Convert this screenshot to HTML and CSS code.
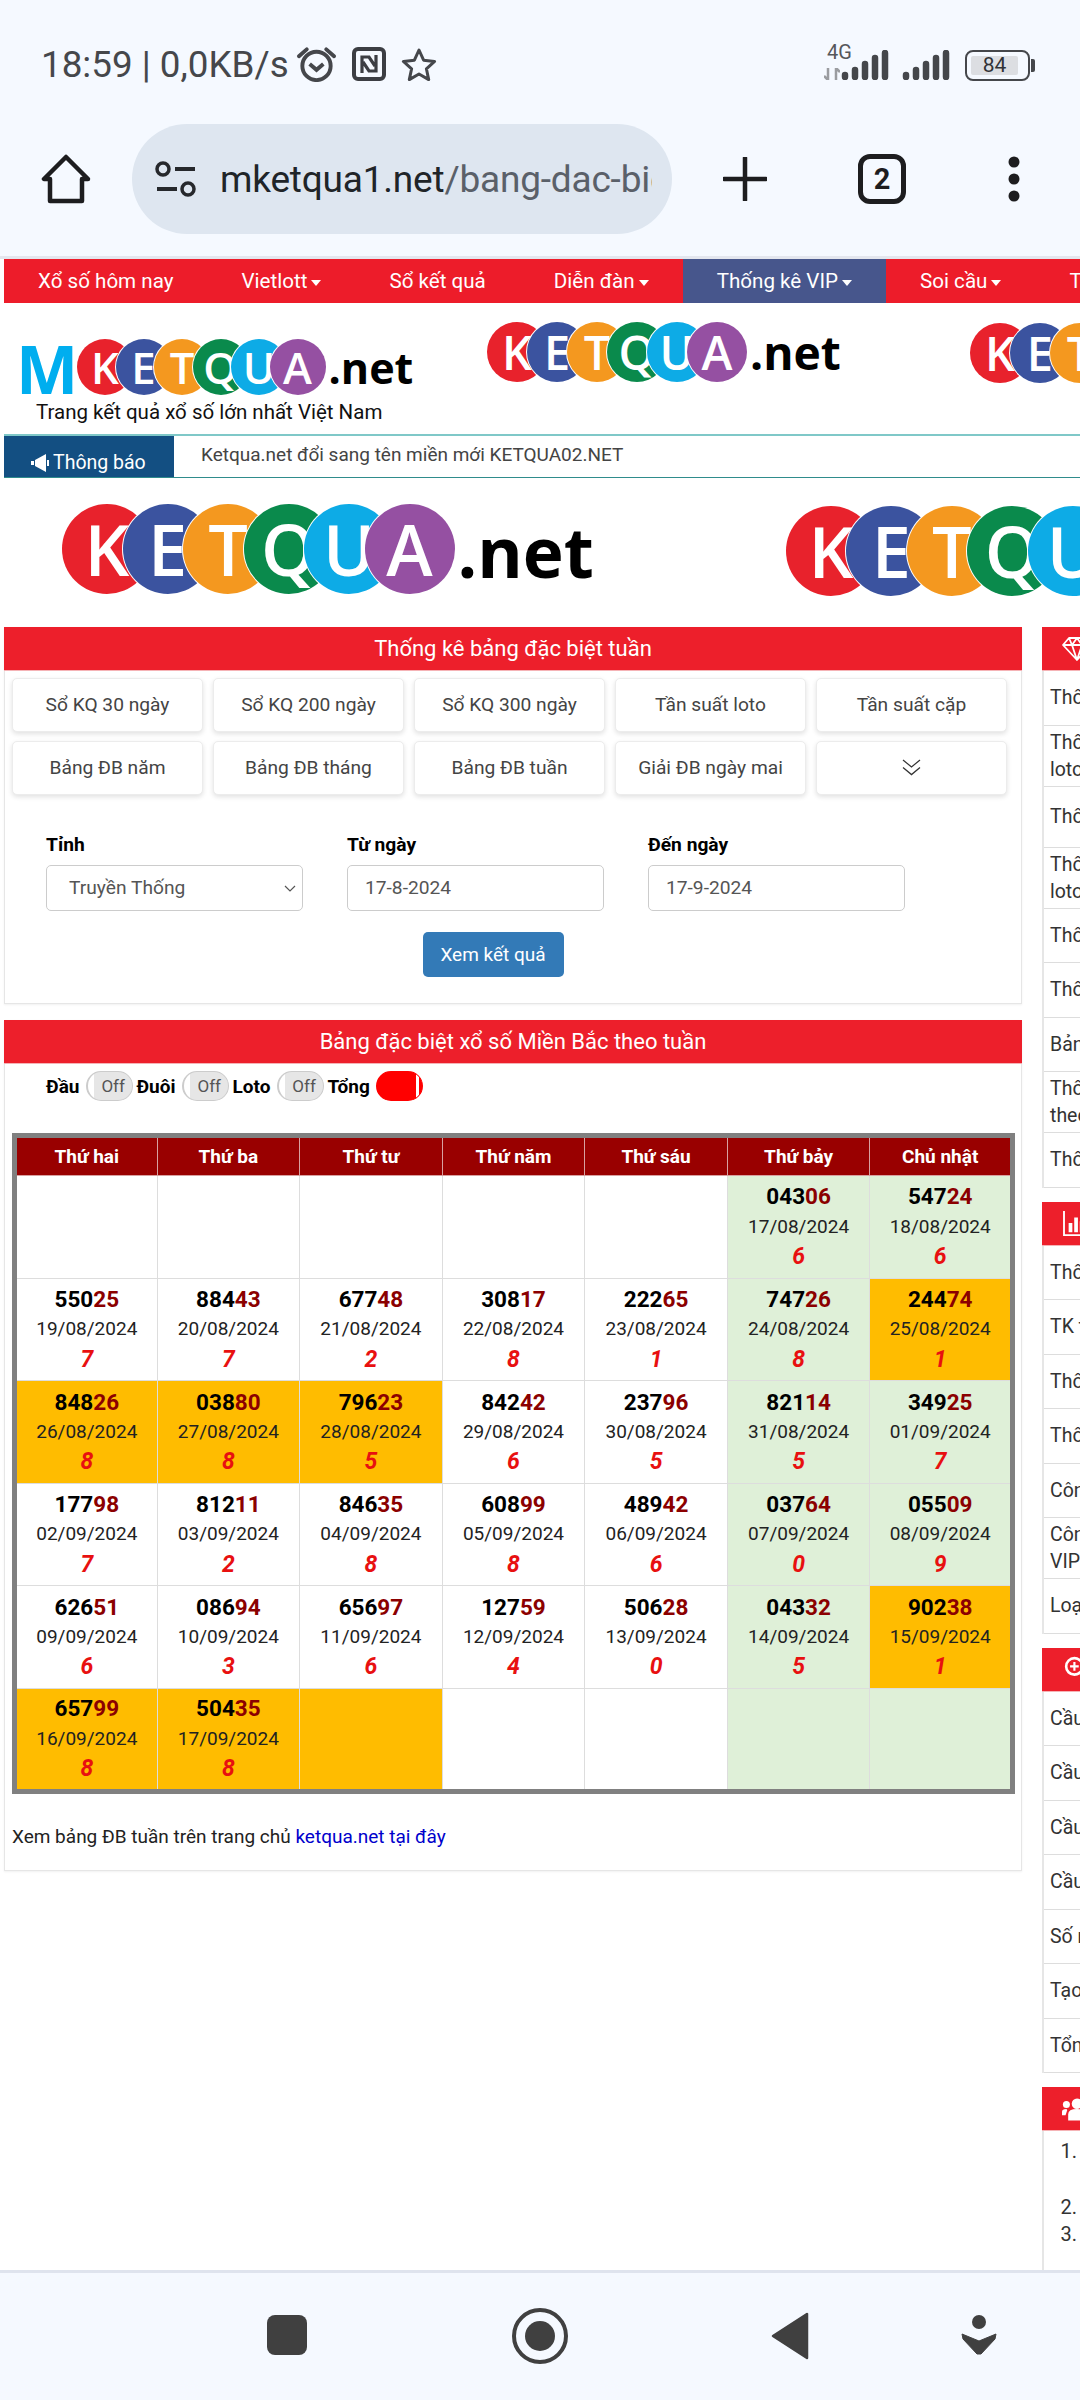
FILE: index.html
```html
<!DOCTYPE html>
<html lang="vi">
<head>
    <meta charset="UTF-8">
    <meta name="viewport" content="width=device-width, initial-scale=1.0">
    <title>Bảng đặc biệt tuần</title>
    <link rel="stylesheet" href="styles.css">
</head>
<body>
<div class="phone">
    <div class="chrome">
        <div class="status-bar">
            <span class="status-time">18:59 | 0,0KB/s</span>
            <svg class="ic-alarm" viewBox="0 0 42 36"><circle cx="21" cy="20" r="14.5" fill="none" stroke="#45474b" stroke-width="4"/><path d="M14 18l7 6 7-6" fill="none" stroke="#45474b" stroke-width="4"/><path d="M3 10L11 3M39 10L31 3" stroke="#45474b" stroke-width="4" stroke-linecap="round"/></svg>
            <svg class="ic-nfc" viewBox="0 0 34 34"><rect x="2" y="2" width="30" height="30" rx="4" fill="none" stroke="#3c3e43" stroke-width="4"/><path d="M10 26V10h7l6 9M24 8v16h-7l-6-9" fill="none" stroke="#3c3e43" stroke-width="3.2"/></svg>
            <svg class="ic-star" viewBox="0 0 36 34"><path d="M18 3l4.6 10.2 11 1.2-8.200 7.400 2.300 10.800L18 27l-9.700 5.600 2.300-10.800-8.200-7.400 11-1.200z" fill="none" stroke="#45474b" stroke-width="3" stroke-linejoin="round"/></svg>
            <div class="status-right">
                <span class="net-label">4G</span>
                <svg class="ic-arrows" viewBox="0 0 16 12"><path d="M4 0v12L0 8M12 12V0l4 4" fill="none" stroke="#9a9ca0" stroke-width="2.500"/></svg>
                <svg class="ic-signal first" viewBox="0 0 48 30"><path d="M4 27v-2M14 27V20M24 27V14M34 27V8M44 27V3" fill="none" stroke="#45474b" stroke-width="6.500" stroke-linecap="round"/></svg>
                <svg class="ic-signal" viewBox="0 0 48 30"><path d="M4 27v-2M14 27V20M24 27V14M34 27V8M44 27V3" fill="none" stroke="#45474b" stroke-width="6.500" stroke-linecap="round"/></svg>
                <div class="battery"><span class="battery-fill">84</span></div>
            </div>
        </div>
        <div class="toolbar">
            <svg class="ic-home" viewBox="0 0 50 50"><path d="M25 3L3 25h6v22h32V25h6z" fill="none" stroke="#1d1d1f" stroke-width="4.500" stroke-linejoin="round"/></svg>
            <div class="url-pill">
                <svg class="ic-tune" viewBox="0 0 42 36"><circle cx="8" cy="8" r="6" fill="none" stroke="#26282c" stroke-width="3.500"/><path d="M20 8h20M2 28h20" stroke="#26282c" stroke-width="4"/><circle cx="33" cy="28" r="6" fill="none" stroke="#26282c" stroke-width="3.500"/></svg>
                <div class="url-text"><span class="url-host">mketqua1.net</span>/bang-dac-biet-tuan.html</div>
            </div>
            <svg class="ic-plus" viewBox="0 0 44 44"><path d="M22 1v42M1 22h42" stroke="#1d1d1f" stroke-width="4.500" stroke-linecap="round"/></svg>
            <div class="tab-count">2</div>
            <svg class="ic-more" viewBox="0 0 12 46"><circle cx="6" cy="6" r="5.500" fill="#1d1d1f"/><circle cx="6" cy="23" r="5.500" fill="#1d1d1f"/><circle cx="6" cy="40" r="5.500" fill="#1d1d1f"/></svg>
        </div>
    </div>

    <div class="page">
        <nav class="topnav">
            <a>Xổ số hôm nay</a>
            <a class="caret">Vietlott</a>
            <a>Sổ kết quả</a>
            <a class="caret">Diễn đàn</a>
            <a class="caret active">Thống kê VIP</a>
            <a class="caret">Soi cầu</a>
            <a>Thành viên</a>
        </nav>

        <header class="site-head">
            <div class="brand">
                <div class="logo logo-brand">
                    <span class="logo-m">M</span>
                    <span class="c k">K</span><span class="c e">E</span><span class="c t">T</span><span class="c q">Q</span><span class="c u">U</span><span class="c a">A</span><span class="net">.net</span>
                </div>
                <div class="tagline">Trang kết quả xổ số lớn nhất Việt Nam</div>
            </div>
            <div class="logo logo-small logo-first">
                <span class="c k">K</span><span class="c e">E</span><span class="c t">T</span><span class="c q">Q</span><span class="c u">U</span><span class="c a">A</span><span class="net">.net</span>
            </div>
            <div class="logo logo-small logo-second">
                <span class="c k">K</span><span class="c e">E</span><span class="c t">T</span><span class="c q">Q</span><span class="c u">U</span><span class="c a">A</span><span class="net">.net</span>
            </div>
        </header>

        <div class="notice">
            <div class="notice-label">
                <svg class="ic-bullhorn" viewBox="0 0 20 20"><path d="M1 8h3v4H1zM5 7l11-6v18L5 13zM17 7h2v6h-2z" fill="#fff"/></svg>
                Thông báo
            </div>
            <div class="notice-text">Ketqua.net đổi sang tên miền mới KETQUA02.NET</div>
        </div>

        <div class="banner">
            <div class="logo logo-big">
                <span class="c k">K</span><span class="c e">E</span><span class="c t">T</span><span class="c q">Q</span><span class="c u">U</span><span class="c a">A</span><span class="net">.net</span>
            </div>
            <div class="logo logo-big logo-big-second">
                <span class="c k">K</span><span class="c e">E</span><span class="c t">T</span><span class="c q">Q</span><span class="c u">U</span><span class="c a">A</span><span class="net">.net</span>
            </div>
        </div>

        <div class="columns">
            <main class="main-col">
                <section class="panel panel-filter">
                    <h2 class="panel-title">Thống kê bảng đặc biệt tuần</h2>
                    <div class="quick-links">
                        <a>Sổ KQ 30 ngày</a>
                        <a>Sổ KQ 200 ngày</a>
                        <a>Sổ KQ 300 ngày</a>
                        <a>Tần suất loto</a>
                        <a>Tần suất cặp</a>
                        <a>Bảng ĐB năm</a>
                        <a>Bảng ĐB tháng</a>
                        <a>Bảng ĐB tuần</a>
                        <a>Giải ĐB ngày mai</a>
                        <a><svg class="ic-double" viewBox="0 0 20 18"><path d="M1 1l9 7.500L19 1M1 9l9 7.500L19 9" fill="none" stroke="#333" stroke-width="1.300"/></svg></a>
                    </div>
                    <form class="filter-form">
                        <div class="field">
                            <label>Tỉnh</label>
                            <div class="input select">Truyền Thống
                                <svg class="ic-chevron" viewBox="0 0 12 8"><path d="M1 1l5 5 5-5" fill="none" stroke="#555" stroke-width="1.200"/></svg>
                            </div>
                        </div>
                        <div class="field">
                            <label>Từ ngày</label>
                            <div class="input">17-8-2024</div>
                        </div>
                        <div class="field">
                            <label>Đến ngày</label>
                            <div class="input">17-9-2024</div>
                        </div>
                    </form>
                    <div class="submit-row"><button type="button">Xem kết quả</button></div>
                </section>

                <section class="panel panel-table">
                    <h2 class="panel-title">Bảng đặc biệt xổ số Miền Bắc theo tuần</h2>
                    <div class="toggles">
                        <b>Đầu</b><span class="toggle">Off</span>
                        <b>Đuôi</b><span class="toggle">Off</span>
                        <b>Loto</b><span class="toggle">Off</span>
                        <b>Tổng</b><span class="toggle on"></span>
                    </div>
                    <table class="db-table">
                        <thead>
                            <tr><th>Thứ hai</th><th>Thứ ba</th><th>Thứ tư</th><th>Thứ năm</th><th>Thứ sáu</th><th>Thứ bảy</th><th>Chủ nhật</th></tr>
                        </thead>
                        <tbody>
                            <tr>
                                <td></td><td></td><td></td><td></td><td></td>
                                <td class="wk"><b>043<i>06</i></b><span>17/08/2024</span><em>6</em></td>
                                <td class="wk"><b>547<i>24</i></b><span>18/08/2024</span><em>6</em></td>
                            </tr>
                            <tr>
                                <td><b>550<i>25</i></b><span>19/08/2024</span><em>7</em></td>
                                <td><b>884<i>43</i></b><span>20/08/2024</span><em>7</em></td>
                                <td><b>677<i>48</i></b><span>21/08/2024</span><em>2</em></td>
                                <td><b>308<i>17</i></b><span>22/08/2024</span><em>8</em></td>
                                <td><b>222<i>65</i></b><span>23/08/2024</span><em>1</em></td>
                                <td class="wk"><b>747<i>26</i></b><span>24/08/2024</span><em>8</em></td>
                                <td class="hot"><b>244<i>74</i></b><span>25/08/2024</span><em>1</em></td>
                            </tr>
                            <tr>
                                <td class="hot"><b>848<i>26</i></b><span>26/08/2024</span><em>8</em></td>
                                <td class="hot"><b>038<i>80</i></b><span>27/08/2024</span><em>8</em></td>
                                <td class="hot"><b>796<i>23</i></b><span>28/08/2024</span><em>5</em></td>
                                <td><b>842<i>42</i></b><span>29/08/2024</span><em>6</em></td>
                                <td><b>237<i>96</i></b><span>30/08/2024</span><em>5</em></td>
                                <td class="wk"><b>821<i>14</i></b><span>31/08/2024</span><em>5</em></td>
                                <td class="wk"><b>349<i>25</i></b><span>01/09/2024</span><em>7</em></td>
                            </tr>
                            <tr>
                                <td><b>177<i>98</i></b><span>02/09/2024</span><em>7</em></td>
                                <td><b>812<i>11</i></b><span>03/09/2024</span><em>2</em></td>
                                <td><b>846<i>35</i></b><span>04/09/2024</span><em>8</em></td>
                                <td><b>608<i>99</i></b><span>05/09/2024</span><em>8</em></td>
                                <td><b>489<i>42</i></b><span>06/09/2024</span><em>6</em></td>
                                <td class="wk"><b>037<i>64</i></b><span>07/09/2024</span><em>0</em></td>
                                <td class="wk"><b>055<i>09</i></b><span>08/09/2024</span><em>9</em></td>
                            </tr>
                            <tr>
                                <td><b>626<i>51</i></b><span>09/09/2024</span><em>6</em></td>
                                <td><b>086<i>94</i></b><span>10/09/2024</span><em>3</em></td>
                                <td><b>656<i>97</i></b><span>11/09/2024</span><em>6</em></td>
                                <td><b>127<i>59</i></b><span>12/09/2024</span><em>4</em></td>
                                <td><b>506<i>28</i></b><span>13/09/2024</span><em>0</em></td>
                                <td class="wk"><b>043<i>32</i></b><span>14/09/2024</span><em>5</em></td>
                                <td class="hot"><b>902<i>38</i></b><span>15/09/2024</span><em>1</em></td>
                            </tr>
                            <tr>
                                <td class="hot"><b>657<i>99</i></b><span>16/09/2024</span><em>8</em></td>
                                <td class="hot"><b>504<i>35</i></b><span>17/09/2024</span><em>8</em></td>
                                <td class="hot"></td>
                                <td></td><td></td>
                                <td class="wk"></td><td class="wk"></td>
                            </tr>
                        </tbody>
                    </table>
                    <p class="table-note">Xem bảng ĐB tuần trên trang chủ <a>ketqua.net tại đây</a></p>
                </section>
            </main>

            <aside class="side-col">
                <div class="side-box">
                    <div class="side-head"><svg class="side-ic" viewBox="0 0 30 26"><path d="M7 2h16l6 7-14 15L1 9zM1 9h28M10 9l5 15 5-15M7 2l3 7 5-7 5 7 3-7" fill="none" stroke="#fff" stroke-width="1.800" stroke-linejoin="round"/></svg>VIP</div>
                    <a class="side-row">Thống kê giải đặc biệt</a>
                    <a class="side-row tall">Thống kê tần suất<br>loto gan</a>
                    <a class="side-row tall">Thống kê đầu đuôi</a>
                    <a class="side-row tall">Thống kê tần suất<br>loto cặp</a>
                    <a class="side-row">Thống kê theo tổng</a>
                    <a class="side-row">Thống kê theo ngày</a>
                    <a class="side-row">Bảng đặc biệt năm</a>
                    <a class="side-row tall">Thống kê đặc biệt<br>theo tuần</a>
                    <a class="side-row">Thống kê chu kỳ</a>
                </div>
                <div class="side-box">
                    <div class="side-head"><svg class="side-ic" viewBox="0 0 30 28"><path d="M1 1v26h28" fill="none" stroke="#fff" stroke-width="2"/><path d="M6 14h4v10H6zM12 8h4v16h-4zM18 12h4v12h-4zM24 5h4v19h-4z" fill="#fff"/></svg>Thống kê</div>
                    <a class="side-row">Thống kê lô gan</a>
                    <a class="side-row">TK tần suất</a>
                    <a class="side-row">Thống kê lô xiên</a>
                    <a class="side-row">Thống kê nhanh</a>
                    <a class="side-row">Công cụ quay thử</a>
                    <a class="side-row tall">Công cụ thống kê<br>VIP</a>
                    <a class="side-row">Loại số</a>
                </div>
                <div class="side-box">
                    <div class="side-head"><svg class="side-ic" viewBox="0 0 30 30"><circle cx="12" cy="12" r="9.500" fill="none" stroke="#fff" stroke-width="3"/><path d="M12 7v10M7 12h10" stroke="#fff" stroke-width="2.500"/><path d="M19 19l9 9" stroke="#fff" stroke-width="4"/></svg>Soi cầu</div>
                    <a class="side-row">Cầu bạch thủ</a>
                    <a class="side-row">Cầu lô tô</a>
                    <a class="side-row">Cầu đặc biệt</a>
                    <a class="side-row">Cầu ba càng</a>
                    <a class="side-row">Số mơ</a>
                    <a class="side-row">Tạo dàn số</a>
                    <a class="side-row">Tổng hợp cầu</a>
                </div>
                <div class="side-box side-last">
                    <div class="side-head"><svg class="side-ic" viewBox="0 0 34 26"><circle cx="17" cy="7" r="6" fill="#fff"/><circle cx="5" cy="8" r="4" fill="#fff"/><circle cx="29" cy="8" r="4" fill="#fff"/><path d="M7 26v-7q0-6 10-6t10 6v7zM0 20v-4q0-3 5-3l1 1-2 6zM34 20v-4q0-3-5-3l-1 1 2 6z" fill="#fff"/></svg>Thành viên</div>
                    <ol class="member-list">
                        <li>Thanh Long<br>VIP</li>
                        <li>Minh Anh</li>
                        <li>Hoàng Nam</li>
                    </ol>
                </div>
            </aside>
        </div>
    </div>

    <div class="sys-nav">
        <svg class="ic-square" viewBox="0 0 40 40"><rect width="40" height="40" rx="8" fill="#404040"/></svg>
        <svg class="ic-circle" viewBox="0 0 56 56"><circle cx="28" cy="28" r="26" fill="none" stroke="#404040" stroke-width="4"/><circle cx="28" cy="28" r="15" fill="#404040"/></svg>
        <svg class="ic-back" viewBox="0 0 38 48"><path d="M36 2v44L2 24z" fill="#404040" stroke="#404040" stroke-width="2.500" stroke-linejoin="round"/></svg>
        <svg class="ic-down" viewBox="0 0 36 40"><circle cx="18" cy="7" r="7" fill="#404040"/><path d="M1 19l17 7 17-7-1 5-14 15h-4L2 24z" fill="#404040" stroke="#404040" stroke-linejoin="round"/></svg>
    </div>
</div>
</body>
</html>
```

FILE: styles.css
```css
* {
    box-sizing: border-box;
}
html, body {
    margin: 0;
    padding: 0;
}
body {
    font-family: Roboto, "Noto Sans", Arial, sans-serif;
    background: #fff;
    color: #333;
}
svg {
    display: block;
    flex: none;
}
.phone {
    width: 1080px;
    height: 2400px;
    overflow: hidden;
    display: flex;
    flex-direction: column;
}

/* browser chrome */
.chrome {
    height: 259px;
    flex: none;
    background: #f5f9ff;
    border-bottom: 3px solid #e3e6ee;
}
.status-bar {
    height: 124px;
    padding: 44px 50px 0 41px;
    display: flex;
    align-items: flex-start;
}
.status-time {
    font-size: 36.800px;
    line-height: 42px;
    color: #45474b;
    width: 255px;
    white-space: nowrap;
}
.ic-alarm {
    width: 41px;
    height: 36px;
    margin-top: 2px;
}
.ic-nfc {
    width: 34px;
    height: 34px;
    margin: 3px 0 0 15px;
}
.ic-star {
    width: 36px;
    height: 34px;
    margin: 3px 0 0 15px;
}
.status-right {
    margin-left: auto;
    display: flex;
    align-items: flex-end;
    height: 36px;
    position: relative;
}
.net-label {
    position: absolute;
    left: 0;
    top: -2px;
    font-size: 20px;
    line-height: 20px;
    color: #55575b;
}
.ic-arrows {
    position: absolute;
    left: -3px;
    bottom: 0;
    width: 16px;
    height: 12px;
}
.ic-signal {
    width: 48px;
    height: 30px;
    margin-right: 13px;
}
.ic-signal.first {
    margin-left: 14px;
}
.ic-signal + .ic-signal {
    margin-right: 15px;
}
.battery {
    width: 65px;
    height: 31px;
    margin-bottom: -1px;
    border: 2px solid #45474b;
    border-radius: 8px;
    padding: 4px;
    position: relative;
}
.battery::after {
    content: "";
    position: absolute;
    right: -7px;
    top: 7px;
    width: 4px;
    height: 13px;
    background: #45474b;
    border-radius: 0 2px 2px 0;
}
.battery-fill {
    display: block;
    width: 47px;
    height: 19px;
    background: #dcdee2;
    font-size: 21px;
    line-height: 19px;
    text-align: center;
    color: #303236;
    border-radius: 2px;
}
.toolbar {
    height: 132px;
    display: flex;
    align-items: center;
    padding: 0 0 22px 41px;
}
.ic-home {
    width: 50px;
    height: 50px;
}
.url-pill {
    width: 540px;
    height: 110px;
    margin-left: 41px;
    background: #dee6f0;
    border-radius: 55px;
    display: flex;
    align-items: center;
    padding: 0 20px 0 23px;
}
.ic-tune {
    width: 42px;
    height: 36px;
}
.url-text {
    margin-left: 23px;
    font-size: 37px;
    letter-spacing: -0.200px;
    color: #5a6069;
    white-space: nowrap;
    overflow: hidden;
    flex: 1;
}
.url-host {
    color: #202428;
}
.ic-plus {
    width: 44px;
    height: 44px;
    margin-left: 51px;
}
.tab-count {
    width: 48px;
    height: 50px;
    margin-left: 91px;
    border: 5px solid #1d1d1f;
    border-radius: 12px;
    font-size: 29px;
    font-weight: 700;
    line-height: 40px;
    text-align: center;
    color: #1d1d1f;
}
.ic-more {
    width: 12px;
    height: 46px;
    margin-left: 102px;
}

/* page */
.page {
    flex: 1;
    min-height: 0;
    overflow: hidden;
    background: #fff;
}
.topnav {
    height: 44px;
    margin-left: 4px;
    background: #ed1c2a;
    display: flex;
    white-space: nowrap;
}
.topnav a {
    padding: 0 34px;
    color: #fff;
    font-size: 20.600px;
    line-height: 44px;
    flex: none;
}
.topnav a.active {
    background: #47568c;
}
.topnav .caret::after {
    content: "";
    display: inline-block;
    margin-left: 4px;
    vertical-align: 2px;
    border-top: 6px solid #fff;
    border-left: 5px solid transparent;
    border-right: 5px solid transparent;
}
.site-head {
    height: 131px;
    display: flex;
    align-items: flex-start;
    overflow: hidden;
}

/* logos, letters sit in overlapping circles */
.logo {
    display: flex;
    align-items: flex-start;
    flex: none;
    white-space: nowrap;
}
.logo .c {
    width: var(--d);
    height: var(--d);
    flex: none;
    border-radius: 50%;
    color: #fff;
    text-align: center;
    font-family: "Open Sans", Roboto, sans-serif;
    font-weight: 600;
    font-size: calc(var(--d) * 0.78);
    line-height: var(--d);
    box-shadow: 0 0 0 1px #fff;
    margin-right: var(--o);
    position: relative;
}
.logo .c.a {
    margin-right: 0;
}
.logo .k { background: #e8222c; }
.logo .e { background: #3b539f; }
.logo .t { background: #f4981f; }
.logo .q { background: #0a8a4c; }
.logo .u { background: #0dabe6; }
.logo .a { background: #9550a2; }
.logo .net {
    font-family: "Open Sans", Roboto, sans-serif;
    font-weight: 700;
    color: #000;
    margin-left: 3px;
    height: var(--d);
    font-size: calc(var(--d) * 0.77);
    line-height: var(--d);
    padding-top: calc(var(--d) * 0.02);
}
.brand {
    width: 484px;
    padding: 36px 0 0 20px;
    flex: none;
}
.logo-brand {
    --d: 56px;
    --o: -17.500px;
}
.logo-m {
    width: 57px;
    margin-top: 1px;
    font-family: "Open Sans", Roboto, sans-serif;
    font-weight: 700;
    font-size: 66px;
    line-height: 56px;
    color: #00aeef;
    flex: none;
    text-indent: -4px;
}
.tagline {
    margin: 4px 0 0 16px;
    font-size: 20.500px;
    line-height: 24px;
    color: #111;
    white-space: nowrap;
}
.logo-small {
    --d: 60px;
    --o: -20px;
    margin-top: 19px;
}
.logo-first {
    margin-left: 3px;
}
.logo-second {
    margin: 20px 0 0 129px;
}
.notice {
    height: 44px;
    margin-left: 4px;
    border-top: 2px solid #7fc8c8;
    border-bottom: 1px solid #2f8c8c;
    display: flex;
}
.notice-label {
    width: 170px;
    background: #134f82;
    color: #fff;
    font-size: 19.500px;
    display: flex;
    align-items: center;
    gap: 3px;
    padding: 12px 0 0 26px;
}
.ic-bullhorn {
    width: 20px;
    height: 20px;
}
.notice-text {
    padding-left: 27px;
    font-size: 19px;
    line-height: 38px;
    color: #444;
}
.banner {
    height: 142px;
    display: flex;
    align-items: flex-start;
    overflow: hidden;
}
.logo-big {
    --d: 90px;
    --o: -29.500px;
    margin: 26px 0 0 62px;
}
.logo-big-second {
    margin: 28px 0 0 192px;
}

.columns {
    display: flex;
    align-items: flex-start;
    width: 1400px;
    padding: 7px 0 0 4px;
}
.main-col {
    width: 1018px;
    flex: none;
}
.panel {
    border: 1px solid #e6e6e6;
    border-top: 0;
    box-shadow: 0 1px 2px rgba(0,0,0,0.06);
}
.panel-title {
    margin: 0 -1px;
    height: 44px;
    background: #ed1f2b;
    border-bottom: 1px solid #f5b3b6;
    color: #fff;
    font-size: 22px;
    font-weight: 400;
    line-height: 43px;
    text-align: center;
}
.panel-filter {
    height: 377px;
    margin-bottom: 16px;
}
.quick-links {
    display: grid;
    grid-template-columns: repeat(5, 191px);
    grid-auto-rows: 54px;
    column-gap: 10px;
    row-gap: 9px;
    padding: 7px 0 0 7px;
}
.quick-links a {
    background: #fff;
    border: 1px solid #ececec;
    border-radius: 5px;
    box-shadow: 0 2px 5px rgba(0,0,0,0.12);
    display: flex;
    align-items: center;
    justify-content: center;
    padding-bottom: 2px;
    font-size: 19.200px;
    color: #444;
}
.ic-double {
    width: 19px;
    height: 17px;
}
.filter-form {
    display: flex;
    gap: 44px;
    padding: 37px 0 0 41px;
}
.field {
    width: 257px;
}
.field label {
    display: block;
    font-size: 19.200px;
    font-weight: 700;
    line-height: 26px;
    margin-bottom: 7px;
    color: #000;
}
.input {
    height: 46px;
    border: 1px solid #ccc;
    border-radius: 5px;
    padding-left: 17px;
    font-size: 19.200px;
    line-height: 44px;
    color: #555;
    position: relative;
}
.input.select {
    padding-left: 22px;
}
.ic-chevron {
    position: absolute;
    right: 6px;
    top: 19px;
    width: 12px;
    height: 8px;
}
.submit-row {
    padding: 21px 40px 0 0;
    text-align: center;
}
.submit-row button {
    width: 141px;
    height: 45px;
    border: none;
    border-radius: 5px;
    background: #337ab7;
    color: #fff;
    font-family: inherit;
    font-size: 19px;
    padding: 0;
}
.panel-table {
    height: 851px;
}
.toggles {
    display: flex;
    align-items: center;
    height: 30px;
    margin: 7px 0 32px 41px;
}
.toggles b {
    font-size: 19px;
    color: #000;
}
.toggle {
    width: 47px;
    height: 30px;
    margin: 0 3.500px 0 6.500px;
    border: 1px solid #ccc;
    border-left: 2px solid #ccc;
    border-radius: 15px;
    background: linear-gradient(to right, #fff 0, #fff 6px, #e6e6e6 6px);
    color: #555;
    font-size: 17px;
    line-height: 28px;
    text-align: right;
    padding-right: 7px;
}
.toggle.on {
    background: linear-gradient(to right, #f00 0, #f00 38px, #fff 38px, #fff 41px, #f00 41px);
    border-color: #f00;
}
.db-table {
    width: 1003px;
    margin-left: 7px;
    table-layout: fixed;
    border-collapse: collapse;
    border: 5px solid #808080;
}
.db-table th {
    height: 40px;
    background: #990000;
    border: 1px solid #d8a0a0;
    border-top: 0;
    color: #fff;
    font-size: 19px;
    font-weight: 700;
    padding: 0;
}
.db-table td {
    height: 102.600px;
    border: 1px solid #ddd;
    padding: 0;
    text-align: center;
    vertical-align: middle;
}
.db-table td.wk {
    background: #dff0d8;
}
.db-table td.hot {
    background: #ffbc00;
}
.db-table td b,
.db-table td span,
.db-table td em {
    display: block;
    line-height: 30.300px;
}
.db-table td b {
    font-size: 22.500px;
    font-weight: 700;
    color: #000;
}
.db-table td b i {
    font-style: normal;
    color: #8b0000;
}
.db-table td span {
    font-size: 19px;
    color: #222;
}
.db-table td em {
    font-size: 23px;
    font-weight: 700;
    color: #e81010;
}
.table-note {
    margin: 29px 0 0 7px;
    font-size: 19px;
    line-height: 28px;
    color: #222;
}
.table-note a {
    color: #0000cc;
}

/* right column runs off the screen */
.side-col {
    width: 300px;
    margin-left: 20px;
    flex: none;
}
.side-box {
    border-left: 2px solid #e6e6e6;
    margin-bottom: 14px;
}
.side-head {
    height: 44px;
    margin-left: -2px;
    background: #ed1f2b;
    border-bottom: 1px solid #f5b3b6;
    color: #fff;
    font-size: 19px;
    display: flex;
    align-items: center;
    gap: 8px;
    padding-left: 20px;
}
.side-ic {
    width: 30px;
    height: 26px;
}
.side-row {
    display: flex;
    align-items: center;
    height: 54.500px;
    padding-left: 6px;
    border-bottom: 1px solid #ddd;
    font-size: 19.500px;
    line-height: 27px;
    color: #333;
}
.side-row.tall {
    height: 61px;
}
.side-last {
    margin: 0;
    height: 190px;
}
.member-list {
    margin: 0;
    padding: 7px 0 0 38px;
    font-size: 20px;
    line-height: 27px;
    color: #333;
}
.member-list li:first-child {
    margin-bottom: 2px;
}

/* android buttons */
.sys-nav {
    height: 130px;
    flex: none;
    position: relative;
    background: #f5f9ff;
    border-top: 3px solid #dfe4ee;
}
.sys-nav svg {
    position: absolute;
}
.ic-square {
    left: 267px;
    top: 42px;
    width: 40px;
    height: 40px;
}
.ic-circle {
    left: 512px;
    top: 35px;
    width: 56px;
    height: 56px;
}
.ic-back {
    left: 771px;
    top: 39px;
    width: 38px;
    height: 48px;
}
.ic-down {
    left: 961px;
    top: 42px;
    width: 36px;
    height: 40px;
}
```
